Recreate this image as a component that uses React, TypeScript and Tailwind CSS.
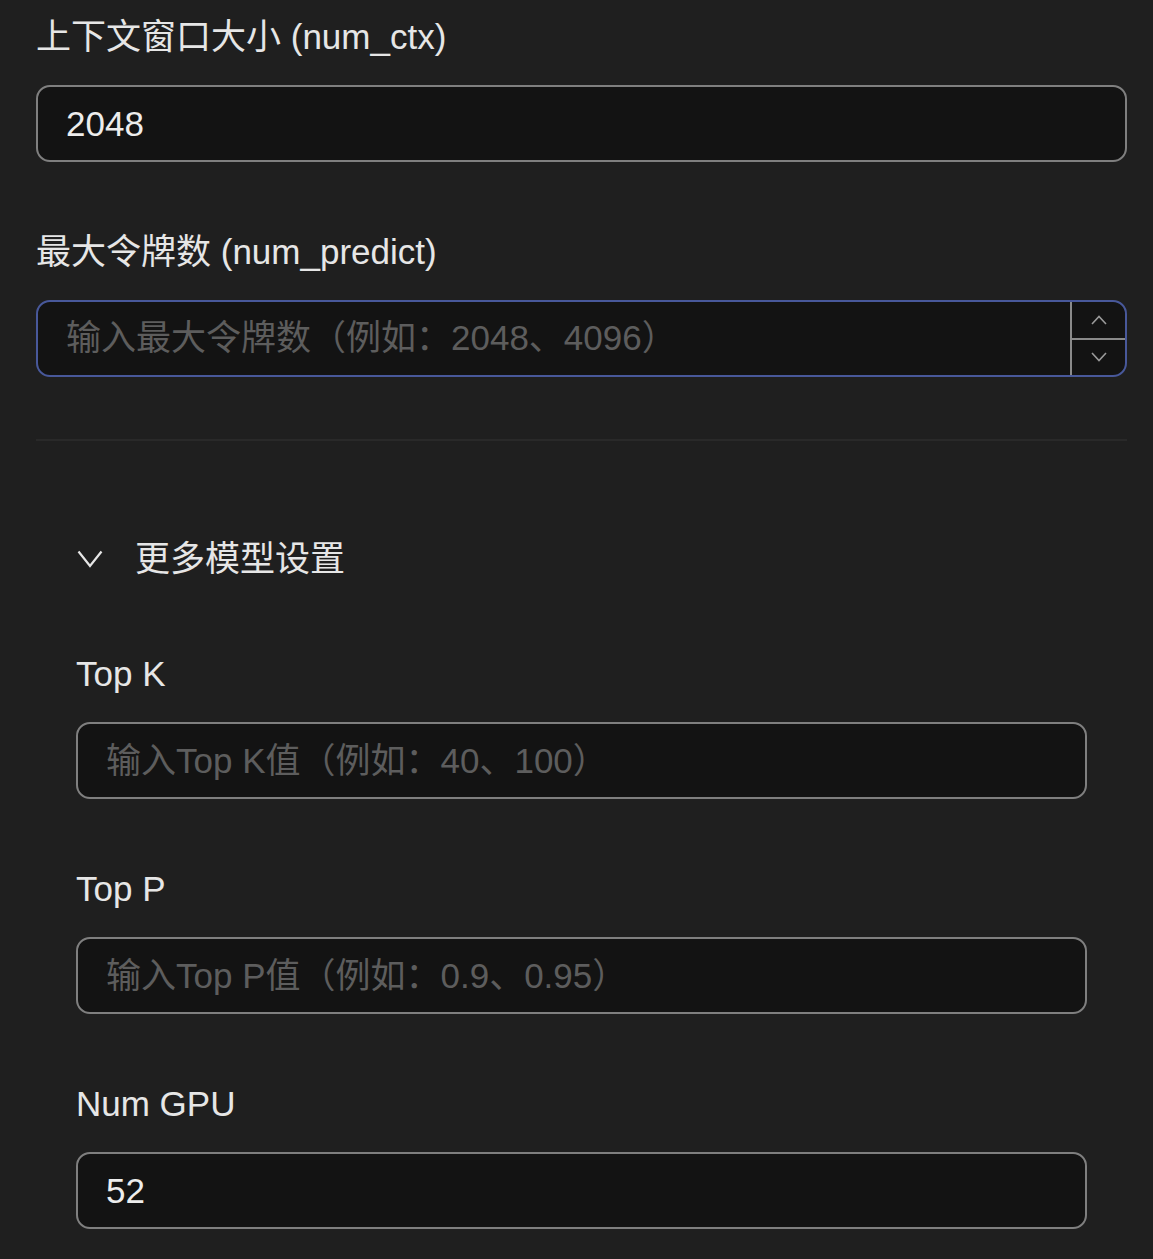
import { useState } from "react";

const FONT = "font-['Liberation_Sans','Noto_Sans_CJK_SC',sans-serif]";

function Label({ children, top = "mt-[70px]" }: { children: React.ReactNode; top?: string }) {
  return <div className={`${top} text-[35px] leading-[40px] text-[#e6e6e6]`}>{children}</div>;
}

function TextField({ value, placeholder }: { value?: string; placeholder?: string }) {
  const [v, setV] = useState(value ?? "");
  return (
    <input
      type="text"
      value={v}
      onChange={(e) => setV(e.target.value)}
      placeholder={placeholder}
      className="mt-[28px] block h-[77px] w-full rounded-[14px] border-2 border-[#7f7f7f] bg-[#131313] px-[28px] text-[35px] text-[#ededed] outline-none placeholder:text-[#5d5d5d]"
    />
  );
}

function NumberField({ placeholder }: { placeholder: string }) {
  return (
    <div className="mt-[28px] flex h-[77px] w-full overflow-hidden rounded-[14px] border-2 border-[#48589a] bg-[#131313]">
      <input
        type="text"
        placeholder={placeholder}
        className="min-w-0 flex-1 bg-transparent px-[28px] text-[35px] text-[#ededed] outline-none placeholder:text-[#5d5d5d]"
      />
      {/* stepper */}
      <div className="flex w-[55px] flex-col border-l-2 border-[#8a8a8a]">
        <button className="flex flex-1 items-center justify-center border-b-2 border-[#8a8a8a]">
          <svg width="16" height="10" viewBox="0 0 16 10" fill="none" stroke="#9a9a9a" strokeWidth="1.6">
            <polyline points="1,9 8,1.5 15,9" />
          </svg>
        </button>
        <button className="flex flex-1 items-center justify-center">
          <svg width="16" height="10" viewBox="0 0 16 10" fill="none" stroke="#9a9a9a" strokeWidth="1.6">
            <polyline points="1,1 8,8.5 15,1" />
          </svg>
        </button>
      </div>
    </div>
  );
}

export default function App() {
  const [open, setOpen] = useState(true);

  return (
    <div className={`min-h-screen bg-[#1f1f1f] pb-[40px] pl-[36px] pr-[26px] pt-[17px] ${FONT}`}>
      {/* Context window */}
      <Label top="mt-0">上下文窗口大小 (num_ctx)</Label>
      <TextField value="2048" />

      {/* Max tokens */}
      <Label>最大令牌数 (num_predict)</Label>
      <NumberField placeholder="输入最大令牌数（例如：2048、4096）" />

      <div className="mt-[62px] h-[2px] bg-[#292929]" />

      {/* More settings */}
      <div className="px-[40px]">
        <button
          onClick={() => setOpen(!open)}
          className="mt-[98px] flex items-center gap-[32px] text-[35px] leading-[40px] text-[#e6e6e6]"
        >
          <svg width="26" height="18" viewBox="0 0 26 18" fill="none" stroke="#e6e6e6" strokeWidth="2.2" className="ml-[1px]">
            <polyline points="1.5,1.5 13,16 24.5,1.5" />
          </svg>
          <span>更多模型设置</span>
        </button>

        {open && (
          <div>
            <Label top="mt-[75px]">Top K</Label>
            <TextField placeholder="输入Top K值（例如：40、100）" />

            <Label top="mt-[70px]">Top P</Label>
            <TextField placeholder="输入Top P值（例如：0.9、0.95）" />

            <Label top="mt-[70px]">Num GPU</Label>
            <TextField value="52" />
          </div>
        )}
      </div>
    </div>
  );
}
